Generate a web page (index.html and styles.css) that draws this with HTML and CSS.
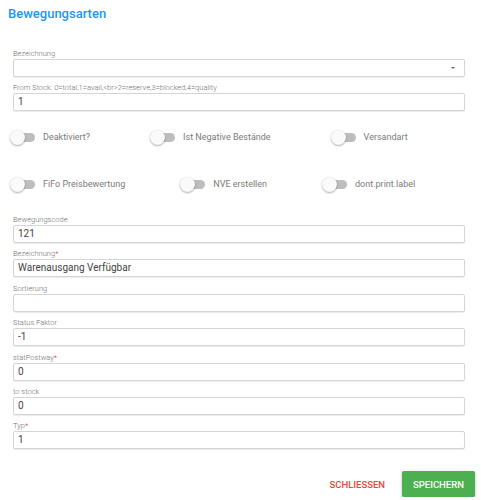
FILE: index.html
```html
<!DOCTYPE html>
<html lang="de">
<head>
<meta charset="utf-8">
<link rel="stylesheet" href="styles.css">
</head>
<body>
<div class="dialog">
  <h1 class="title">Bewegungsarten</h1>
  <div class="top-fields">
    <div class="field">
      <label class="lbl">Bezeichnung</label>
      <div class="input select"><span class="arrow"></span></div>
    </div>
    <div class="field">
      <label class="lbl">From Stock: 0=total,1=avail,&lt;br&gt;2=reserve,3=blocked,4=quality</label>
      <div class="input">1</div>
    </div>
  </div>
  <div class="switches row1">
    <div class="sw"><span class="track"><span class="thumb"></span></span><span class="sw-lbl">Deaktiviert?</span></div>
    <div class="sw"><span class="track"><span class="thumb"></span></span><span class="sw-lbl">Ist Negative Bestände</span></div>
    <div class="sw"><span class="track"><span class="thumb"></span></span><span class="sw-lbl">Versandart</span></div>
  </div>
  <div class="switches row2">
    <div class="sw"><span class="track"><span class="thumb"></span></span><span class="sw-lbl">FiFo Preisbewertung</span></div>
    <div class="sw"><span class="track"><span class="thumb"></span></span><span class="sw-lbl">NVE erstellen</span></div>
    <div class="sw"><span class="track"><span class="thumb"></span></span><span class="sw-lbl">dont.print.label</span></div>
  </div>
  <div class="fields">
    <div class="field"><label class="lbl">Bewegungscode</label><div class="input">121</div></div>
    <div class="field"><label class="lbl">Bezeichnung<span class="req">*</span></label><div class="input">Warenausgang Verfügbar</div></div>
    <div class="field"><label class="lbl">Sortierung</label><div class="input"></div></div>
    <div class="field"><label class="lbl">Status Faktor</label><div class="input">-1</div></div>
    <div class="field"><label class="lbl">statPostway<span class="req">*</span></label><div class="input">0</div></div>
    <div class="field"><label class="lbl">to stock</label><div class="input">0</div></div>
    <div class="field"><label class="lbl">Typ<span class="req">*</span></label><div class="input">1</div></div>
  </div>
  <div class="actions">
    <button class="btn-close">SCHLIESSEN</button>
    <button class="btn-save">SPEICHERN</button>
  </div>
</div>
</body>
</html>
```
FILE: styles.css
```css
* { box-sizing: border-box; }
html, body { margin: 0; padding: 0; background: #fff; }
body { font-family: Roboto, "Liberation Sans", sans-serif; color: #333; }
.dialog { padding: 6px 16px 0 8px; width: 481px; }
.title { margin: 0; font-size: 13px; font-weight: 500; color: #2196f3; line-height: 16px; height: 16px; }
.top-fields { margin-top: 27px; margin-left: 5px; display: flex; flex-direction: column; gap: 6px; }
.field { display: flex; flex-direction: column; }
.lbl { font-size: 7.5px; font-weight: 300; color: #6f6f6f; line-height: 9px; height: 9px; margin-bottom: 1px; }
.req { color: #e53935; }
.input { height: 18px; border: 1px solid #d4d4d4; border-radius: 2px; box-shadow: 0 1px 1px rgba(0,0,0,0.08); font-size: 10px; line-height: 16px; padding-left: 4px; color: #444; width: 452px; }
.select { position: relative; }
.arrow { position: absolute; right: 9px; top: 7px; width: 0; height: 0; border-left: 2px solid transparent; border-right: 2px solid transparent; border-top: 2px solid #666; }
.switches { display: flex; align-items: center; height: 16px; padding-left: 2px; }
.row1 { margin-top: 18px; gap: 60px; }
.row2 { margin-top: 31px; gap: 55px; }
.sw { display: flex; align-items: center; }
.track { position: relative; width: 21px; height: 9px; background: #bdbdbd; border-radius: 5px; margin-left: 4px; }
.thumb { position: absolute; left: -4px; top: -3px; width: 15px; height: 15px; border-radius: 50%; background: #fafafa; box-shadow: 0 1px 2px rgba(0,0,0,0.3), 0 0 1px rgba(0,0,0,0.15); }
.sw-lbl { margin-left: 8px; font-size: 9px; color: #7a7a7a; }
.fields { margin-top: 23px; margin-left: 5px; display: flex; flex-direction: column; gap: 6.4px; }
.actions { display: flex; justify-content: flex-end; align-items: center; margin-top: 22px; gap: 17px; }
button { font-family: Roboto, "Liberation Sans", sans-serif; font-size: 9.5px; font-weight: 500; border: none; cursor: pointer; }
.btn-close { background: transparent; color: #f44336; padding: 0; }
.btn-save { background: #4caf50; color: #fff; width: 73px; height: 26px; border-radius: 2px; box-shadow: 0 1px 3px rgba(0,0,0,0.3); margin-right: -10px; }
```
